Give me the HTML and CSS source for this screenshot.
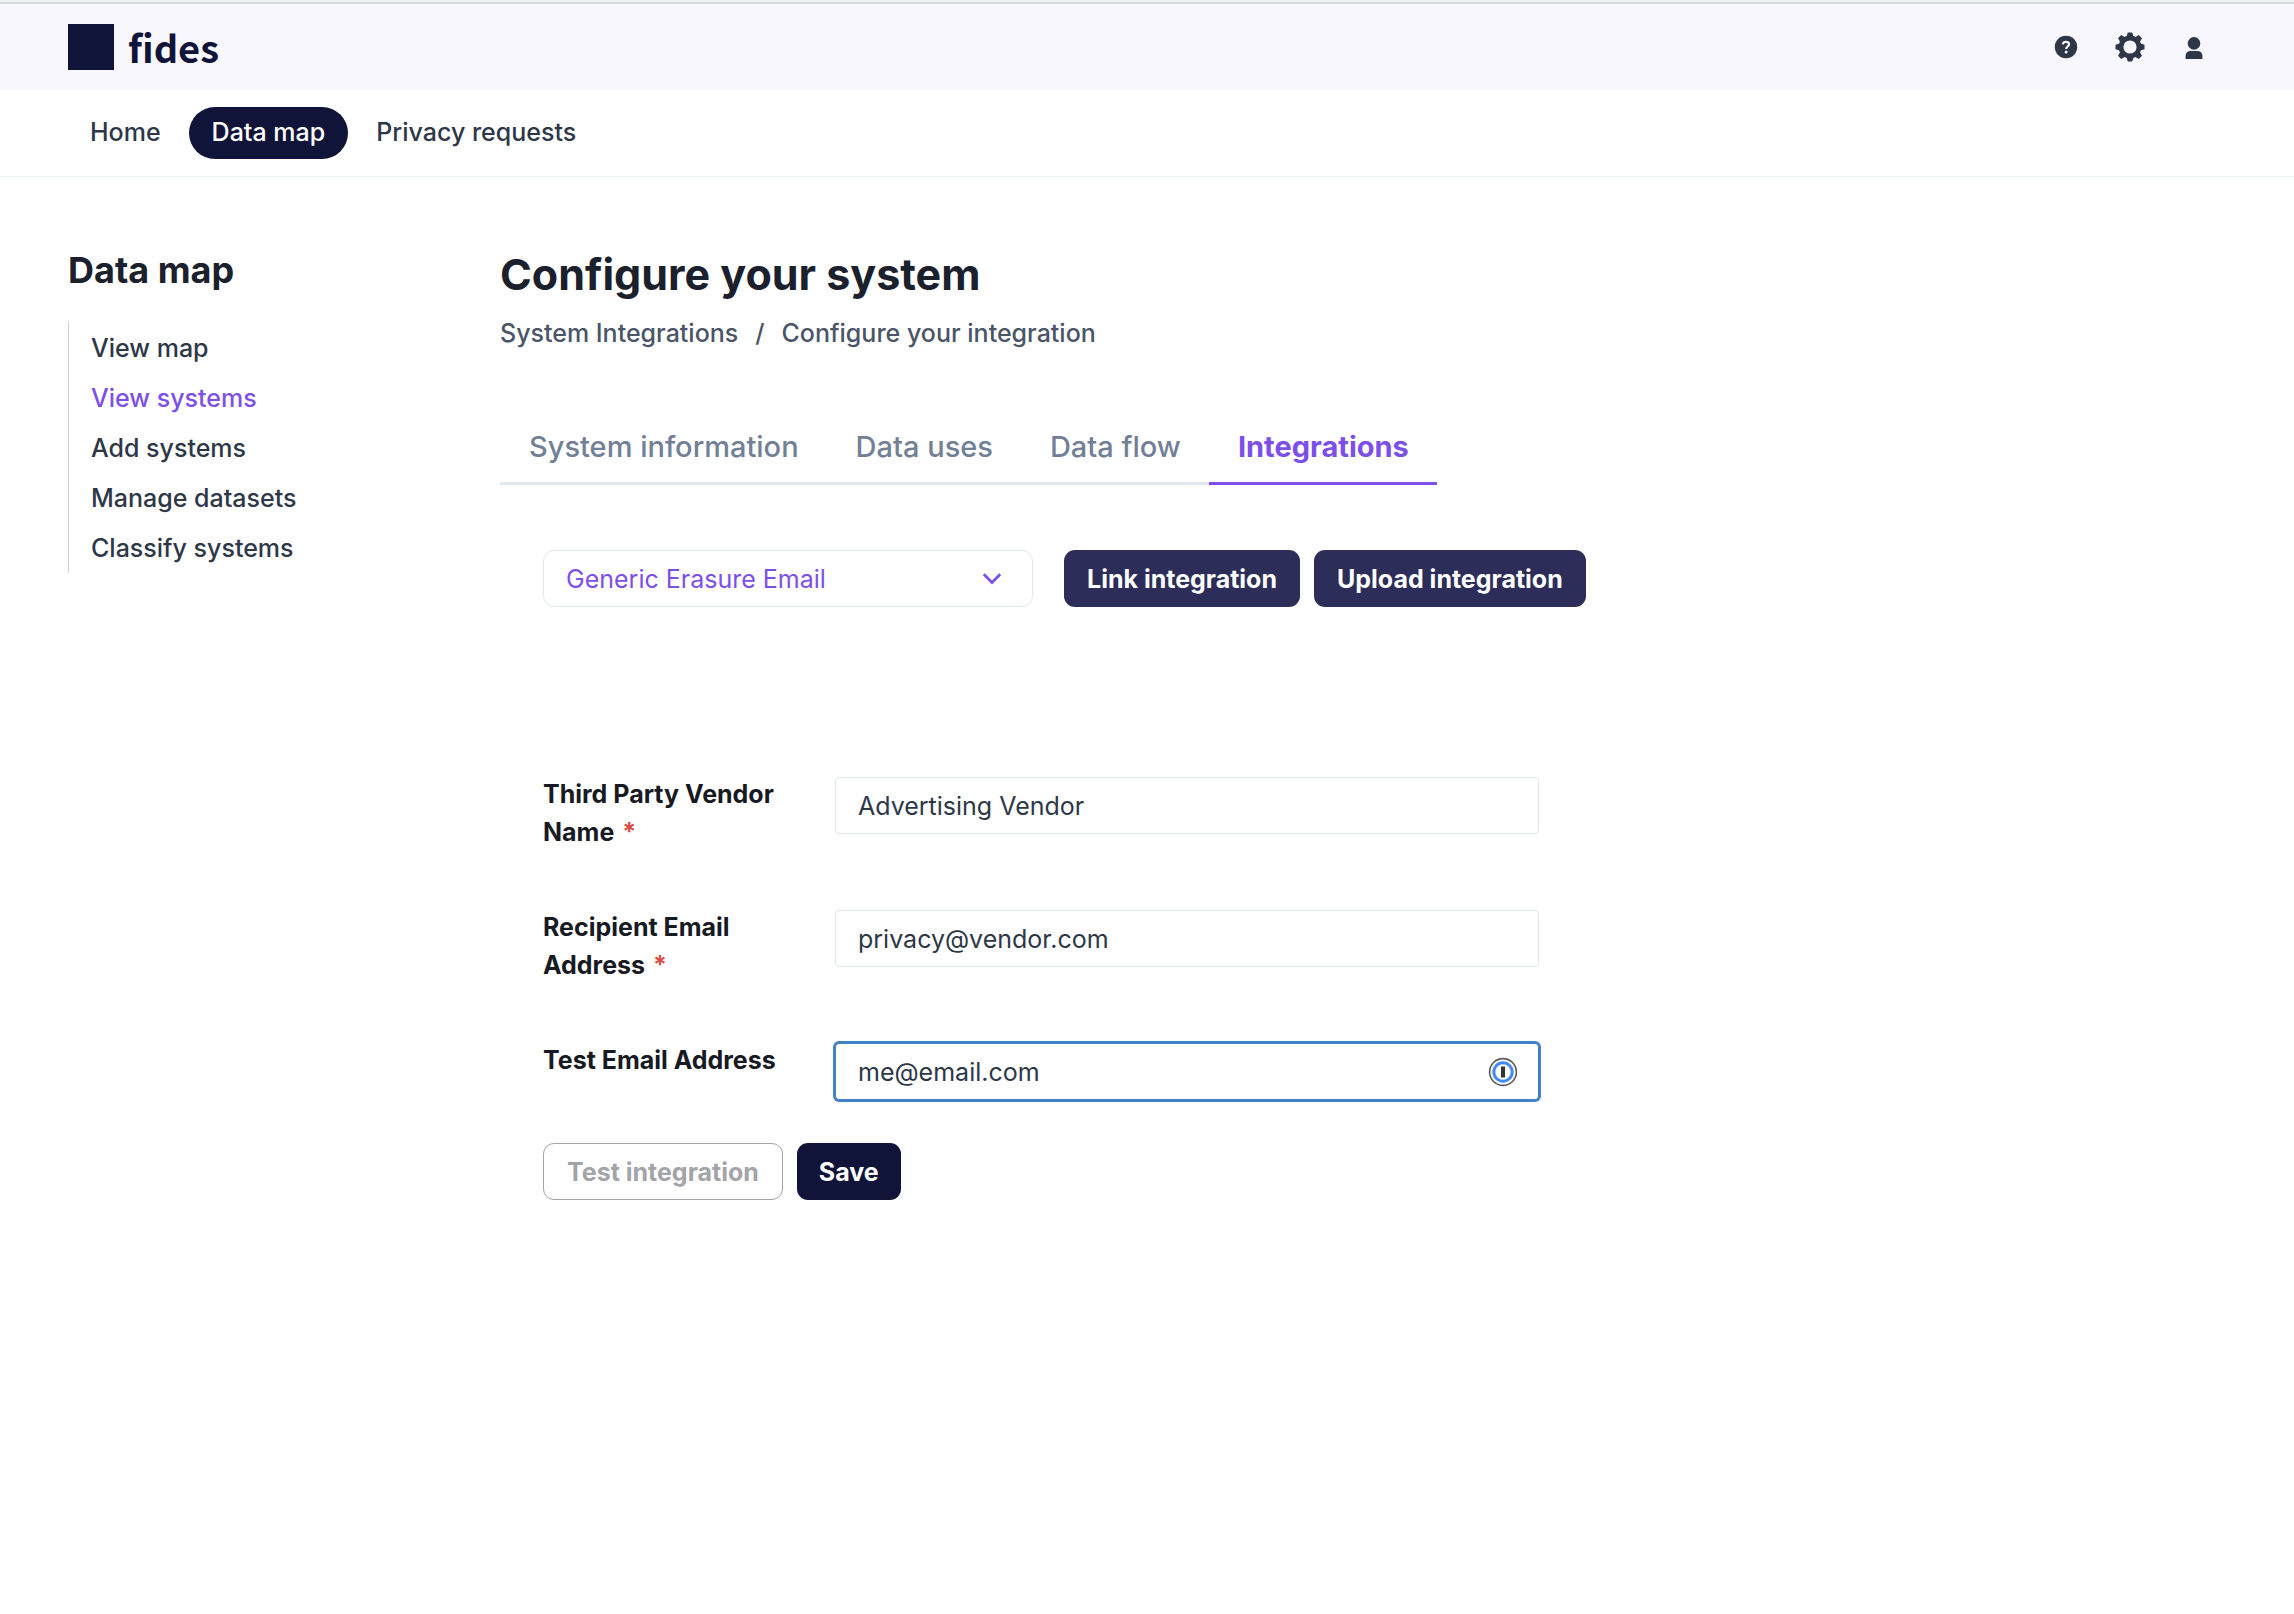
FILE: index.html
```html
<!DOCTYPE html>
<html lang="en">
<head>
<meta charset="utf-8">
<meta name="viewport" content="width=device-width, initial-scale=1">
<title>Fides - Configure your system</title>
<link rel="stylesheet" href="styles.css">
</head>
<body>
<header class="header">
  <a class="logo" href="#">
    <span class="logo-mark"></span>
    <span class="logo-text">fides</span>
  </a>
  <div class="header-actions">
    <button class="icon-button" type="button" aria-label="Help">
      <svg width="24" height="24" viewBox="0 0 24 24" aria-hidden="true">
        <circle cx="12" cy="12" r="11.2" fill="currentColor"/>
        <path d="M8.8 9.3C9 7.6 10.3 6.9 12 6.9C13.9 6.9 15.1 7.8 15.1 9.3C15.1 11.4 12.1 11.3 12.1 14" fill="none" stroke="#f7f7fd" stroke-width="2.2"/>
        <circle cx="12.1" cy="17" r="1.5" fill="#f7f7fd"/>
      </svg>
    </button>
    <button class="icon-button" type="button" aria-label="Settings">
      <svg width="30" height="30" viewBox="-15 -15 30 30" aria-hidden="true">
        <g fill="currentColor">
          <g>
            <path d="M-3.6 -10L-2.2 -14.5H2.2L3.6 -10Z"/>
            <path d="M-3.6 10L-2.2 14.5H2.2L3.6 10Z"/>
            <path d="M-10 -3.6L-14.5 -2.2V2.2L-10 3.6Z"/>
            <path d="M10 -3.6L14.5 -2.2V2.2L10 3.6Z"/>
          </g>
          <g transform="rotate(45)">
            <path d="M-3.6 -10L-2.2 -14.7H2.2L3.6 -10Z"/>
            <path d="M-3.6 10L-2.2 14.7H2.2L3.6 10Z"/>
            <path d="M-10 -3.6L-14.7 -2.2V2.2L-10 3.6Z"/>
            <path d="M10 -3.6L14.7 -2.2V2.2L10 3.6Z"/>
          </g>
        </g>
        <circle r="9" fill="none" stroke="currentColor" stroke-width="4.8"/>
      </svg>
    </button>
    <button class="icon-button" type="button" aria-label="Account">
      <svg width="24" height="24" viewBox="0 0 24 24" aria-hidden="true">
        <circle cx="12" cy="8.4" r="6.3" fill="currentColor"/>
        <path d="M3.6 24V21.2C3.6 18 5.8 16.1 8.8 16.1H15.2C18.2 16.1 20.4 18 20.4 21.2V24Z" fill="currentColor"/>
      </svg>
    </button>
  </div>
</header>

<nav class="top-nav" aria-label="Primary">
  <a class="top-link" href="#">Home</a>
  <a class="top-link top-link-active" href="#" aria-current="page">Data map</a>
  <a class="top-link" href="#">Privacy requests</a>
</nav>

<div class="page">
  <aside class="sidebar">
    <h2 class="sidebar-title">Data map</h2>
    <nav class="side-nav" aria-label="Data map">
      <a class="side-link" href="#">View map</a>
      <a class="side-link side-link-active" href="#">View systems</a>
      <a class="side-link" href="#">Add systems</a>
      <a class="side-link" href="#">Manage datasets</a>
      <a class="side-link" href="#">Classify systems</a>
    </nav>
  </aside>

  <main class="main">
    <h1 class="title">Configure your system</h1>
    <nav class="breadcrumb" aria-label="Breadcrumb">
      <a href="#">System Integrations</a>
      <span>/</span>
      <a href="#">Configure your integration</a>
    </nav>

    <div class="tabs" role="tablist">
      <button class="tab" type="button" role="tab">System information</button>
      <button class="tab" type="button" role="tab">Data uses</button>
      <button class="tab" type="button" role="tab">Data flow</button>
      <button class="tab tab-active" type="button" role="tab" aria-selected="true">Integrations</button>
    </div>

    <div class="panel">
      <div class="toolbar">
        <div class="select-box">
          <select class="select" aria-label="Integration type">
            <option>Generic Erasure Email</option>
          </select>
          <svg class="select-arrow" width="20" height="14" viewBox="0 0 20 14" aria-hidden="true">
            <path d="M1.8 2.2L10 10.4L18.2 2.2" fill="none" stroke="currentColor" stroke-width="2.8"/>
          </svg>
        </div>
        <div class="button-row">
          <button class="button button-indigo" type="button">Link integration</button>
          <button class="button button-indigo" type="button">Upload integration</button>
        </div>
      </div>

      <form class="form">
        <div class="field">
          <label class="label" for="vendor">Third Party Vendor <span class="label-end">Name <span class="required">*</span></span></label>
          <input class="input" id="vendor" type="text" value="Advertising Vendor">
        </div>
        <div class="field">
          <label class="label" for="recipient">Recipient Email <span class="label-end">Address <span class="required">*</span></span></label>
          <input class="input" id="recipient" type="text" value="privacy@vendor.com">
        </div>
        <div class="field">
          <label class="label" for="test-email">Test Email Address</label>
          <div class="input-box">
            <input class="input input-focused" id="test-email" type="text" value="me@email.com">
            <svg class="input-icon" width="30" height="30" viewBox="0 0 30 30" aria-hidden="true">
              <circle cx="15" cy="15" r="13.4" fill="#fff" stroke="#5a5a5a" stroke-width="1.6"/>
              <circle cx="15" cy="15" r="9.2" fill="#fff" stroke="#448aff" stroke-width="3"/>
              <rect x="13" y="9.5" width="4" height="11" fill="#333"/>
            </svg>
          </div>
        </div>
        <div class="button-row form-actions">
          <button class="button button-outline" type="button" disabled>Test integration</button>
          <button class="button button-primary" type="button">Save</button>
        </div>
      </form>
    </div>
  </main>
</div>
</body>
</html>
```

FILE: styles.css
```css
:root {
  --navy: #111439;
  --indigo: #2c2d59;
  --purple: #7d4fea;
  --ink: #1a202c;
  --text: #2d3748;
  --line: #e2e8f0;
}

* {
  box-sizing: border-box;
}

body {
  margin: 0;
  background: #fff;
  color: var(--text);
  font: 400 25px/38px Inter, "Liberation Sans", sans-serif;
}

a {
  color: inherit;
  text-decoration: none;
}

button,
input,
select {
  font: inherit;
  color: inherit;
}

.header {
  display: flex;
  align-items: center;
  justify-content: space-between;
  height: 90px;
  padding: 2px 68px 0;
  border-top: 2px solid #f0f2f1;
  background: #f7f7fd;
  box-shadow: inset 0 2px #d5d9dc;
}

.logo {
  display: flex;
  align-items: center;
  gap: 14px;
  color: var(--navy);
}

.logo-mark {
  width: 46px;
  height: 46px;
  background: var(--navy);
}

.logo-text {
  font: 700 38px/46px "Noto Sans CJK JP", sans-serif;
}

.header-actions {
  display: flex;
}

.icon-button {
  display: flex;
  align-items: center;
  justify-content: center;
  width: 64px;
  height: 64px;
  padding: 0;
  border: 0;
  background: none;
}

.top-nav {
  display: flex;
  align-items: center;
  gap: 5px;
  height: 87px;
  padding: 0 67px;
  border-bottom: 1px solid #edf2f7;
}

.top-link {
  padding: 6px 23px 8px;
  border-radius: 26px;
  font-weight: 500;
}

.top-link-active {
  background: var(--navy);
  color: #fff;
}

.page {
  display: flex;
  gap: 72px;
  padding: 71px 68px;
}

.sidebar {
  flex: 0 0 360px;
}

.sidebar-title {
  margin: 0 0 29px;
  color: var(--ink);
  font-size: 36px;
  line-height: 44px;
}

.side-nav {
  display: flex;
  flex-direction: column;
  padding: 2px 0 0 22px;
  border-left: 1px solid #cbd5e0;
}

.side-link {
  font-weight: 500;
  line-height: 50px;
}

.side-link-active {
  color: var(--purple);
}

.main {
  flex: 1;
  min-width: 0;
}

.title {
  margin: 0 0 14px;
  color: var(--ink);
  font-size: 43px;
  line-height: 52px;
}

.breadcrumb {
  display: flex;
  gap: 17px;
  color: #4a5568;
  font-weight: 500;
}

.tabs {
  display: flex;
  width: fit-content;
  margin-top: 58px;
  border-bottom: 3px solid var(--line);
}

.tab {
  margin-bottom: -3px;
  padding: 15px 28px 13px 29px;
  border: 0;
  border-bottom: 3px solid transparent;
  background: none;
  color: #718096;
  font-size: 29px;
  font-weight: 500;
  line-height: 44px;
}

.tab-active {
  border-color: var(--purple);
  color: var(--purple);
  font-weight: 700;
}

.panel {
  padding: 65px 43px;
}

.toolbar {
  display: flex;
  gap: 31px;
}

.select-box {
  display: grid;
  width: 490px;
  align-items: center;
  color: var(--purple);
}

.select {
  grid-area: 1 / 1;
  height: 57px;
  padding: 0 64px 0 22px;
  border: 1px solid var(--line);
  border-radius: 11px;
  background: #fff;
  appearance: none;
}

.select-arrow {
  grid-area: 1 / 1;
  justify-self: end;
  margin-right: 31px;
  pointer-events: none;
}

.button-row {
  display: flex;
  gap: 14px;
}

.button {
  height: 57px;
  padding: 0 23px;
  border: 0;
  border-radius: 11px;
  font-weight: 700;
}

.button-indigo {
  background: var(--indigo);
  color: #fff;
}

.button-primary {
  padding: 0 22px;
  background: var(--navy);
  color: #fff;
}

.button-outline {
  border: 1px solid #a3a4a9;
  background: #fff;
  color: #a3a4a9;
}

.form {
  display: flex;
  flex-direction: column;
  gap: 59px;
  margin-top: 170px;
}

.field {
  display: grid;
  grid-template-columns: 256px minmax(0, 704px);
  column-gap: 36px;
  align-items: start;
}

.label {
  margin-top: -2px;
  color: #171923;
  font-weight: 700;
}

.label-end {
  white-space: nowrap;
}

.required {
  margin-left: 2px;
  color: #dd4b45;
}

.input {
  width: 100%;
  height: 57px;
  padding: 0 22px;
  border: 1px solid var(--line);
  border-radius: 4px;
  background: #fff;
}

.input-box {
  display: grid;
  align-items: center;
}

.input-box > * {
  grid-area: 1 / 1;
}

.input-focused {
  border-color: #4281c9;
  box-shadow: 0 0 0 2px #4281c9;
}

.input-icon {
  justify-self: end;
  margin-right: 21px;
}

.form-actions {
  margin-top: -16px;
}
```
